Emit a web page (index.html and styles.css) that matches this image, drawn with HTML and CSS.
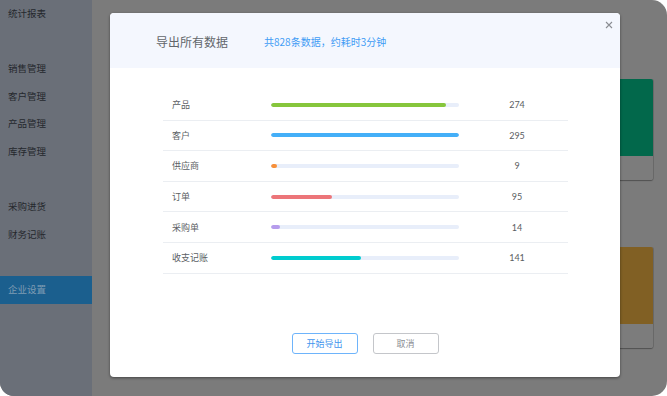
FILE: index.html
```html
<!DOCTYPE html>
<html lang="zh">
<head>
<meta charset="utf-8">
<link rel="stylesheet" href="styles.css">
</head>
<body>
<div class="frame">
  <aside class="sidebar">
    <div class="nav-item">统计报表</div>
    <div class="nav-item"></div>
    <div class="nav-item">销售管理</div>
    <div class="nav-item">客户管理</div>
    <div class="nav-item">产品管理</div>
    <div class="nav-item">库存管理</div>
    <div class="nav-item"></div>
    <div class="nav-item">采购进货</div>
    <div class="nav-item">财务记账</div>
    <div class="nav-item"></div>
    <div class="nav-item active">企业设置</div>
  </aside>
  <main class="main">
    <div class="card">
      <div class="card-top green"></div>
      <div class="card-bottom"></div>
    </div>
    <div class="card">
      <div class="card-top brown"></div>
      <div class="card-bottom"></div>
    </div>
  </main>

  <div class="modal">
    <div class="modal-header">
      <span class="modal-title">导出所有数据</span>
      <span class="modal-sub">共828条数据，约耗时3分钟</span>
      <span class="close">
        <svg width="8" height="8" viewBox="0 0 8 8"><path d="M1 1L7 7M7 1L1 7" stroke="#8a8d93" stroke-width="1.1" fill="none"/></svg>
      </span>
    </div>
    <div class="modal-body">
      <div class="table">
        <div class="row"><span class="label">产品</span><span class="track"><span class="fill c-green" style="width:93%"></span></span><span class="num">274</span></div>
        <div class="row"><span class="label">客户</span><span class="track"><span class="fill c-blue" style="width:100%"></span></span><span class="num">295</span></div>
        <div class="row"><span class="label">供应商</span><span class="track"><span class="fill c-orange" style="width:3.1%"></span></span><span class="num">9</span></div>
        <div class="row"><span class="label">订单</span><span class="track"><span class="fill c-red" style="width:32.2%"></span></span><span class="num">95</span></div>
        <div class="row"><span class="label">采购单</span><span class="track"><span class="fill c-purple" style="width:4.7%"></span></span><span class="num">14</span></div>
        <div class="row"><span class="label">收支记账</span><span class="track"><span class="fill c-cyan" style="width:47.8%"></span></span><span class="num">141</span></div>
      </div>
    </div>
    <div class="modal-footer">
      <button class="btn btn-primary">开始导出</button>
      <button class="btn btn-default">取消</button>
    </div>
  </div>
</div>
</body>
</html>
```
FILE: styles.css
```css
* { box-sizing: border-box; }
html, body {
  margin: 0;
  padding: 0;
  background: #ffffff;
}
body {
  width: 667px;
  height: 396px;
  overflow: hidden;
  font-family: "Noto Sans CJK SC", "Noto Sans", sans-serif;
}
.frame {
  position: relative;
  width: 667px;
  height: 396px;
  display: flex;
  border-radius: 0 15px 15px 14px;
  overflow: hidden;
  background: #7b7b7b;
}
.sidebar {
  width: 92px;
  flex: none;
  background: #6a6f78;
  display: flex;
  flex-direction: column;
}
.nav-item {
  height: 27.6px;
  line-height: 27.6px;
  padding-left: 8px;
  font-size: 9.5px;
  color: #25282d;
  flex: none;
}
.nav-item:first-child {
  line-height: 27px;
}
.nav-item.active {
  background: #1b5f8e;
  color: #7f9cb3;
}
.main {
  flex: 1;
  display: flex;
  flex-direction: column;
  align-items: flex-end;
  padding: 79px 14px 0 0;
  gap: 67px;
}
.card {
  width: 110px;
  display: flex;
  flex-direction: column;
  box-shadow: 0 1px 1px rgba(0,0,0,0.35), 1px 0 0 rgba(0,0,0,0.12);
  border-radius: 2px;
  overflow: hidden;
}
.card-top { height: 77px; }
.card-top.green { background: #02684b; }
.card-top.brown { background: #816024; }
.card-bottom {
  height: 24px;
  background: #7c7c7c;
}
.modal {
  position: absolute;
  left: 110px;
  top: 13px;
  width: 510px;
  height: 364px;
  background: #ffffff;
  border-radius: 4px;
  box-shadow: 0 1px 3px rgba(0,0,0,0.45);
  display: flex;
  flex-direction: column;
  overflow: hidden;
}
.modal-header {
  position: relative;
  height: 55px;
  flex: none;
  background: #f4f7fe;
  display: flex;
  align-items: center;
  padding-left: 46px;
}
.modal-title {
  font-size: 12px;
  color: #62666b;
  margin-right: 36px;
  margin-top: 1px;
}
.modal-sub {
  font-size: 10px;
  color: #3f9cf5;
  margin-top: 1px;
}
.close {
  position: absolute;
  right: 7px;
  top: 8px;
  width: 8px;
  height: 8px;
  display: flex;
}
.modal-body {
  flex: 1;
  padding: 22px 52px 0 53px;
}
.table {
  display: flex;
  flex-direction: column;
}
.row {
  height: 30.6px;
  display: flex;
  align-items: center;
  border-bottom: 1px solid #ebeef2;
}
.label {
  width: 108px;
  padding-left: 9px;
  font-size: 9px;
  color: #5c5f64;
}
.track {
  width: 188px;
  height: 4px;
  border-radius: 2px;
  background: #e8eefa;
  display: flex;
  overflow: hidden;
}
.fill {
  height: 100%;
  border-radius: 2px;
  min-width: 5px;
}
.c-green { background: #86c63c; }
.c-blue { background: #44aff8; }
.c-orange { background: #f7903a; }
.c-red { background: #ec7579; }
.c-purple { background: #b69cec; }
.c-cyan { background: #00cccf; }
.num {
  flex: 1;
  text-align: center;
  padding-left: 7px;
  font-family: "Lato", "DejaVu Sans", sans-serif;
  font-size: 9px;
  color: #5a5d62;
}
.modal-footer {
  flex: none;
  display: flex;
  justify-content: center;
  gap: 15px;
  padding-bottom: 23px;
}
.btn {
  width: 66px;
  height: 21px;
  border-radius: 3px;
  background: #ffffff;
  font-family: "Noto Sans CJK SC", sans-serif;
  font-size: 9px;
  padding: 0;
  line-height: 19px;
}
.btn-primary {
  border: 1px solid #6eb4fb;
  color: #3f95ee;
}
.btn-default {
  border: 1px solid #c4c6ca;
  color: #8b8e93;
}
```
